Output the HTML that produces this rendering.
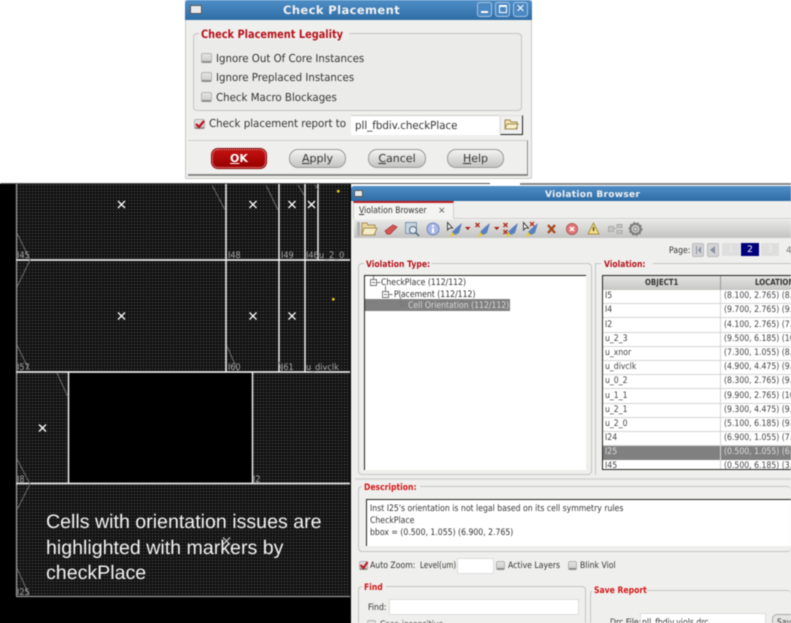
<!DOCTYPE html>
<html><head><meta charset="utf-8"><style>
html,body{margin:0;padding:0;background:#fff}
#p{position:relative;width:791px;height:623px;overflow:hidden;background:#fff;font-family:"DejaVu Sans","Liberation Sans",sans-serif;font-size:10px;color:#333;text-rendering:geometricPrecision;filter:blur(.4px)}
#p div,#p span,#p svg{position:absolute;box-sizing:border-box}
.t{white-space:nowrap;line-height:14px;height:14px}
.s{font-size:9px;transform:scaleX(.86);transform-origin:0 50%}
.d{font-size:11px;transform:scaleX(.93);transform-origin:0 50%}
.r{color:#b5121b;font-weight:bold;font-size:9px;transform:scaleX(.85);transform-origin:0 50%}
.cb{width:11px;height:10px;background:linear-gradient(#e4e4e2,#cfcfcd);border:1px solid #b5b5b3;border-bottom:2px solid #8d8d8b;border-radius:2px}
.g{border:1px solid #c4c4c2;border-radius:4px}
.btn{height:19px;top:149px;border:1px solid #9a9a98;border-radius:9px;background:linear-gradient(#f4f4f3,#dcdcda 50%,#c4c4c2);text-align:center;font-size:11px;line-height:17px;color:#333}
.bar{background:linear-gradient(#4f8ec7,#2f6da6);}
.lab{color:#a8a8a8;font-size:9px;white-space:nowrap;line-height:10px;height:10px;transform:scaleX(.9);transform-origin:0 50%}
.row{left:603px;width:188px;height:14.2px;border-bottom:1px solid #d4d4d4;background:#fff}
.c1,.c2{font-size:9px;line-height:13px;white-space:nowrap;color:#444;transform:scaleX(.86);transform-origin:0 50%}
.c1{left:2px;top:0}
.c2{left:121px;top:0}
</style></head><body>
<div style="position:absolute;left:0;top:184px;width:351px;height:439px;background:#000"></div>
<div style="position:absolute;left:351px;top:186px;width:440px;height:437px;background:#efefed"></div>
<div id="p">

<!-- top strip -->
<div style="left:0;top:183px;width:490px;height:1px;background:#555"></div>
<div style="left:520px;top:183px;width:271px;height:2px;background:#888"></div>

<!-- Canvas -->
<div style="left:0;top:184px;width:351px;height:439px;background:#000"></div>
<svg style="left:16px;top:184px" width="334" height="412"><defs><pattern id="dots" width="3" height="3" patternUnits="userSpaceOnUse"><rect width="3" height="3" fill="#131313"/><rect x="1" y="1" width="1" height="1" fill="#5c5c5c"/></pattern></defs><rect width="334" height="412" fill="url(#dots)"/></svg>
<div style="left:69px;top:373px;width:183px;height:110px;background:#000"></div>
<svg style="left:0;top:0" width="351" height="623" viewBox="0 0 351 623">
<g stroke="#d8d8d8" stroke-width="1.3" fill="none">
<path d="M16.500 184V596" stroke="#999"/>
<path d="M16 596.500H350" stroke="#999"/>
<path d="M16 260H350M16 372H350M16 483.500H350" stroke="#e5e5e5" stroke-width="1.7"/>
<path d="M226 184V372M279 184V372M305 184V372M318 184V260M68.500 372V483M252.500 372V483" stroke="#f0f0f0" stroke-width="1.500"/>
</g>
<g stroke="#6a6a6a" stroke-width="1" fill="none">
<path d="M212 185L225 210M266 185L278 210M298 185L304 195M315 185L318 190M17 233L30 260L17 287M17 345L29 370M227 346L238 371M279 362L282 371M57 373L68 397M17 459L30 484L17 510M17 568L29 595"/>
</g>
<g stroke="#fff" stroke-width="1.3" fill="none">
<path d="M118 201l7 7m0-7l-7 7M249.500 201l7 7m0-7l-7 7M288.500 201l7 7m0-7l-7 7M308 201l7 7m0-7l-7 7M118 312.500l7 7m0-7l-7 7M249.500 312.500l7 7m0-7l-7 7M288.500 312.500l7 7m0-7l-7 7M39 424.500l7 7m0-7l-7 7"/>
<path d="M223 537.500l7 7m0-7l-7 7" stroke="#bbb"/>
</g>
<rect x="337" y="190" width="2.500" height="2.500" fill="#f0d020"/>
<rect x="332" y="298" width="2.500" height="2.500" fill="#f0d020"/>
</svg>
<span class="lab" style="left:17px;top:251px">I45</span>
<span class="lab" style="left:228px;top:251px">I48</span>
<span class="lab" style="left:281px;top:251px">I49</span>
<span class="lab" style="left:306px;top:251px">I46</span>
<span class="lab" style="left:319px;top:251px;letter-spacing:.5px">u_2_0</span>
<span class="lab" style="left:17px;top:363px">I57</span>
<span class="lab" style="left:228px;top:363px">I60</span>
<span class="lab" style="left:281px;top:363px">I61</span>
<span class="lab" style="left:306px;top:363px">u_divclk</span>
<span class="lab" style="left:17px;top:475px">I8</span>
<span class="lab" style="left:253px;top:475px">I2</span>
<span class="lab" style="left:17px;top:588px">I25</span>
<div style="left:46px;top:510px;width:300px;font-family:'Liberation Sans',sans-serif;font-size:19.600px;line-height:25.500px;color:#f2f2f2;white-space:nowrap">Cells with orientation issues are<br>highlighted with markers by<br>checkPlace</div>

<!-- Check Placement dialog -->
<div style="left:185px;top:0;width:347px;height:179px;background:#efefed;border:1px solid #c8c8c8;border-top:0;border-radius:0 0 2px 2px"></div>
<div class="bar" style="left:185px;top:0;width:347px;height:20px;border-radius:3px 3px 0 0"></div>
<div style="left:190px;top:5px;width:12px;height:9px;background:#e8e8e8;border:1px solid #555"></div>
<div class="t" style="left:283px;top:3px;font-weight:bold;font-size:11.500px;color:#f2f2f2;letter-spacing:.4px">Check Placement</div>
<div style="left:477px;top:2px;width:15px;height:15px;border:1px solid #a8c6e2;border-radius:3px;background:#4a88c2"></div>
<div style="left:481px;top:11px;width:7px;height:2px;background:#fff"></div>
<div style="left:495px;top:2px;width:15px;height:15px;border:1px solid #a8c6e2;border-radius:3px;background:#4a88c2"></div>
<div style="left:499px;top:5px;width:8px;height:8px;border:1px solid #fff;border-top-width:2px"></div>
<div style="left:513px;top:2px;width:15px;height:15px;border:1px solid #a8c6e2;border-radius:3px;background:#4a88c2"></div>
<div class="t" style="left:513px;top:2px;width:15px;text-align:center;color:#fff;font-weight:bold;font-size:11px">✕</div>

<div class="g" style="left:193px;top:33px;width:329px;height:78px;background:#ebebe9"></div>
<div style="left:199px;top:28px;width:150px;height:12px;background:#efefed"></div>
<div class="t r" style="left:201px;top:27px;font-size:11.500px">Check Placement Legality</div>
<div class="cb" style="left:201px;top:53px"></div><div class="t d" style="left:216px;top:52px">Ignore Out Of Core Instances</div>
<div class="cb" style="left:201px;top:72px"></div><div class="t d" style="left:216px;top:71px">Ignore Preplaced Instances</div>
<div class="cb" style="left:201px;top:92px"></div><div class="t d" style="left:216px;top:91px">Check Macro Blockages</div>

<div class="cb" style="left:194px;top:119px"></div>
<svg style="left:194px;top:118px" width="12" height="12"><path d="M2 6l3 3 5-6" stroke="#c01020" stroke-width="2.200" fill="none"/></svg>
<div class="t d" style="left:209px;top:117px">Check placement report to</div>
<div style="left:351px;top:115px;width:148px;height:20px;background:#fff;border-top:1px solid #ccc"></div>
<div class="t d" style="left:355px;top:119px">pll_fbdiv.checkPlace</div>
<div style="left:500px;top:115px;width:23px;height:20px;background:#f0f0ee;border:1px solid #ddd;border-right:1px solid #222;border-bottom:1px solid #222"></div>
<svg style="left:504px;top:118px" width="15" height="13"><path d="M1 2h5l1 2h6v7H1z" fill="#f3e3ae" stroke="#a08a50"/><path d="M3 6h11l-2 5H1z" fill="#f8efcb" stroke="#a08a50"/></svg>

<div style="left:188px;top:140px;width:340px;height:36px;border-top:1px solid #cfcfcd;border-right:1px solid #888;border-bottom:2px solid #888"></div>
<div style="left:212px;top:149px;width:54px;height:19px;border-radius:6px;background:linear-gradient(#c41212,#980000);border:1px dotted #f4c0c0;outline:1px solid #8a0000;text-align:center;font-weight:bold;font-size:11px;line-height:17px;color:#fff"><u>O</u>K</div>
<div class="btn" style="left:289px;width:57px"><u>A</u>pply</div>
<div class="btn" style="left:368px;width:58px"><u>C</u>ancel</div>
<div class="btn" style="left:447px;width:57px"><u>H</u>elp</div>

<!-- Violation Browser window -->
<div style="left:351px;top:186px;width:440px;height:437px;background:#efefed"></div>
<div class="bar" style="left:351px;top:186px;width:440px;height:15px;border-radius:3px 0 0 0"></div>
<div style="left:354px;top:190px;width:9px;height:7px;background:#e8e8e8;border:1px solid #555"></div>
<div class="t" style="left:545px;top:188px;font-weight:bold;font-size:9px;color:#f2f2f2;letter-spacing:.3px">Violation Browser</div>
<div style="left:353px;top:218px;width:438px;height:1px;background:#d0d0ce"></div>
<div style="left:353px;top:201px;width:101px;height:18px;background:#f4f4f2;border:1px solid #d0d0ce;border-top:2px solid #c02020;border-bottom:0"></div>
<div class="t s" style="left:359px;top:204px"><u>V</u>iolation Browser</div>
<div class="t" style="left:438px;top:204px;font-size:9px;color:#555">×</div>
<div style="left:354px;top:220px;width:437px;height:18px;background:linear-gradient(#e8e8e6,#c4c4c2)"></div>
<div style="left:357px;top:222px;width:3px;height:14px;background:#b0b0ae"></div>
<svg style="left:352px;top:220px" width="300" height="18" viewBox="0 0 300 18">
<path d="M10 3h5l1 2h7v10H10z" fill="#e8d8a0" stroke="#a89058"/><path d="M12 8h13l-3 7H10z" fill="#f5ecc8" stroke="#a89058"/>
<path d="M33 11l8-6 4 2-7 7h-3z" fill="#d05858" stroke="#b84040"/>
<rect x="53.500" y="2.500" width="11" height="11" fill="#c8d4e0" stroke="#7f95aa"/><circle cx="61" cy="10" r="3.500" fill="#dfe8f0" stroke="#506880"/><path d="M64 13l3 3" stroke="#4c6074" stroke-width="1.500"/>
<circle cx="81" cy="9" r="6" fill="#a8b8e8" stroke="#7284c0"/><rect x="80" y="5" width="2" height="2" fill="#fff"/><rect x="80" y="8" width="2" height="5" fill="#fff"/>
<path d="M95.500 2.500l5 5.500h-3l-2 2z" fill="#fff" stroke="#444"/><path d="M110 3l-3 10-4 2-3-3 5-5z" fill="#5a80c0"/><path d="M100 12l-2 5 5-2z" fill="#e8c830"/>
<path d="M113 7h5.500l-2.700 3z" fill="#a01818"/>
<path d="M123.500 3l4 4m0-4l-4 4" stroke="#b03020" stroke-width="1.500"/><path d="M138 3l-3 10-4 2-3-3 5-5z" fill="#5a80c0"/><path d="M128 12l-2 5 5-2z" fill="#e8c830"/>
<path d="M142 7h5.500l-2.700 3z" fill="#a01818"/>
<path d="M151.500 3l4 4m0-4l-4 4M151.500 10l4 4m0-4l-4 4" stroke="#b03020" stroke-width="1.500"/><path d="M166 3l-3 10-4 2-3-3 5-5z" fill="#5a80c0"/><path d="M156 12l-2 5 5-2z" fill="#e8c830"/>
<path d="M171.500 2.500l5 5.500h-3l-2 2z" fill="#fff" stroke="#444"/><path d="M178 2l4 4m0-4l-4 4" stroke="#b03020" stroke-width="1.300"/><path d="M186 3l-3 10-4 2-3-3 5-5z" fill="#5a80c0"/><path d="M176 12l-2 5 5-2z" fill="#e8c830"/>
<path d="M196 5l7 8m0-8l-7 8" stroke="#a8481c" stroke-width="2.400"/>
<circle cx="220" cy="9" r="5.500" fill="#e07878" stroke="#b05858"/><path d="M218 7l4 4m0-4l-4 4" stroke="#fff" stroke-width="1.500"/>
<path d="M241.500 3l5.500 11h-11z" fill="#f4e088" stroke="#a89040"/><rect x="240.800" y="7" width="1.500" height="4" fill="#604810"/>
<path d="M256.500 6.500h5v5h-5zM265 4.500h5v3h-5zM265 10.500h5v3h-5zM261.500 8.500h3" fill="#c6c6c4" stroke="#aaaaa8"/>
<circle cx="283.500" cy="9" r="5" fill="none" stroke="#808080" stroke-width="2.200"/><circle cx="283.500" cy="9" r="2" fill="none" stroke="#808080"/><circle cx="283.500" cy="9" r="6.500" fill="none" stroke="#808080" stroke-dasharray="2 2"/>
</svg>
<div class="t s" style="left:669px;top:244px">Page:</div>
<div style="left:692px;top:243px;width:12px;height:14px;background:#d4d4d6;border:1px solid #bbb;border-radius:2px"></div>
<svg style="left:695px;top:246px" width="7" height="8"><path d="M1 0h1v8H1zM6 0v8L3 4z" fill="#8890a0"/></svg>
<div style="left:707px;top:243px;width:12px;height:14px;background:#d4d4d6;border:1px solid #bbb;border-radius:2px"></div>
<svg style="left:710px;top:246px" width="6" height="8"><path d="M5 0v8L0 4z" fill="#8890a0"/></svg>
<div style="left:722px;top:243px;width:18px;height:13px;background:#dedede"></div>
<div class="t" style="left:722px;top:243px;width:18px;text-align:center;font-size:9px;color:#eee">1</div>
<div style="left:741px;top:243px;width:18px;height:13px;background:#00007c"></div>
<div class="t" style="left:741px;top:243px;width:18px;text-align:center;font-size:9px;color:#fff">2</div>
<div style="left:761px;top:243px;width:18px;height:13px;background:#dedede"></div>
<div class="t" style="left:761px;top:243px;width:18px;text-align:center;font-size:9px;color:#eee">3</div>
<div class="t" style="left:786px;top:244px;font-size:9px;color:#777">4</div>

<!-- Violation type -->
<div class="g" style="left:358px;top:263px;width:234px;height:212px"></div>
<div style="left:364px;top:258px;width:68px;height:12px;background:#efefed"></div>
<div class="t r" style="left:366px;top:258px">Violation Type:</div>
<div style="left:364px;top:275px;width:222px;height:195px;background:#fff;border-top:1px solid #222;border-left:1px solid #222"></div>
<div style="left:365px;top:299px;width:145px;height:12px;background:#808080"></div>
<svg style="left:364px;top:275px" width="50" height="35"><g fill="none" stroke="#777"><rect x="6.500" y="4.500" width="6" height="6"/><path d="M8 7.500h3M12.500 7.500h4M9.500 1v3"/><rect x="18.500" y="16.500" width="6" height="6"/><path d="M20 19.500h3M24.500 19.500h4M21.500 11v5M36.500 22v8.500h8"/></g></svg>
<div class="t s" style="left:381px;top:276px">CheckPlace (112/112)</div>
<div class="t s" style="left:394px;top:288px">Placement (112/112)</div>
<div class="t s" style="left:408px;top:299px;color:#d8d8d8">Cell Orientation (112/112)</div>

<!-- Violation -->
<div style="left:595px;top:263px;width:1px;height:212px;background:#c4c4c2"></div>
<div style="left:596px;top:263px;width:195px;height:1px;background:#c4c4c2"></div>
<div style="left:601px;top:258px;width:52px;height:12px;background:#efefed"></div>
<div class="t r" style="left:604px;top:258px">Violation:</div>
<div style="left:602px;top:275px;width:189px;height:195px;background:#fff;border-top:1px solid #222;border-left:1px solid #222;border-bottom:1px solid #222"></div>
<div style="left:603px;top:276px;width:188px;height:14px;background:linear-gradient(#e4e4e2,#c6c6c4)"></div>
<div style="left:720px;top:276px;width:1px;height:14px;background:#999"></div>
<div class="t" style="left:645px;top:276px;font-size:8.500px;font-weight:bold;color:#333;transform:scaleX(.82);transform-origin:0 50%">OBJECT1</div>
<div class="t" style="left:755px;top:276px;font-size:8.500px;font-weight:bold;color:#333;transform:scaleX(.82);transform-origin:0 50%">LOCATION</div>
<div class="row" style="top:290px"><span class="c1">I5</span><span class="c2">(8.100, 2.765) (8.</span></div>
<div class="row" style="top:304px"><span class="c1">I4</span><span class="c2">(9.700, 2.765) (9.</span></div>
<div class="row" style="top:318.500px"><span class="c1">I2</span><span class="c2">(4.100, 2.765) (7.3</span></div>
<div class="row" style="top:332.500px"><span class="c1">u_2_3</span><span class="c2">(9.500, 6.185) (10</span></div>
<div class="row" style="top:346.500px"><span class="c1">u_xnor</span><span class="c2">(7.300, 1.055) (8.7</span></div>
<div class="row" style="top:361px"><span class="c1">u_divclk</span><span class="c2">(4.900, 4.475) (9.3</span></div>
<div class="row" style="top:375px"><span class="c1">u_0_2</span><span class="c2">(8.300, 2.765) (9.</span></div>
<div class="row" style="top:389.500px"><span class="c1">u_1_1</span><span class="c2">(9.900, 2.765) (10</span></div>
<div class="row" style="top:403.500px"><span class="c1">u_2_1</span><span class="c2">(9.300, 4.475) (9.9</span></div>
<div class="row" style="top:417.500px"><span class="c1">u_2_0</span><span class="c2">(5.100, 6.185) (9.5</span></div>
<div class="row" style="top:431.500px"><span class="c1">I24</span><span class="c2">(6.900, 1.055) (7.3</span></div>
<div class="row" style="top:446px;background:#808080;border:0"><span class="c1" style="color:#ddd">I25</span><span class="c2" style="color:#ddd">(0.500, 1.055) (6.9</span></div>
<div class="row" style="top:460px;height:9px;border:0;overflow:hidden"><span class="c1">I45</span><span class="c2">(0.500, 6.185) (3.7</span></div>
<div style="left:720px;top:290px;width:1px;height:179px;background:#d4d4d4"></div>
<div style="left:355px;top:478px;width:436px;height:2px;background:#d8d8d6"></div>

<!-- Description -->
<div class="g" style="left:358px;top:486px;width:433px;height:66px;border-right:0"></div>
<div style="left:362px;top:481px;width:58px;height:12px;background:#efefed"></div>
<div class="t r" style="left:364px;top:481px;color:#d01818">Description:</div>
<div style="left:366px;top:499px;width:425px;height:47px;background:#fff;border-top:1px solid #222;border-left:1px solid #222"></div>
<div class="t s" style="left:370px;top:502px">Inst I25's orientation is not legal based on its cell symmetry rules</div>
<div class="t s" style="left:370px;top:514px">CheckPlace</div>
<div class="t s" style="left:370px;top:526px">bbox = (0.500, 1.055) (6.900, 2.765)</div>

<div class="cb" style="left:359px;top:561px;width:9px;height:9px"></div>
<svg style="left:359px;top:560px" width="11" height="11"><path d="M1.500 5l3 3 4-6" stroke="#c01020" stroke-width="2" fill="none"/></svg>
<div class="t s" style="left:370px;top:559px">Auto Zoom:</div>
<div class="t s" style="left:420px;top:559px;transform:scaleX(.8)">Level(um)</div>
<div style="left:457px;top:558px;width:37px;height:16px;background:#fff;border:1px solid #ddd"></div>
<div class="cb" style="left:496px;top:561px;width:9px;height:9px"></div>
<div class="t s" style="left:508px;top:559px">Active Layers</div>
<div class="cb" style="left:568px;top:561px;width:9px;height:9px"></div>
<div class="t s" style="left:580px;top:559px">Blink Viol</div>

<!-- Find / Save -->
<div class="g" style="left:358px;top:586px;width:228px;height:50px"></div>
<div style="left:362px;top:581px;width:24px;height:12px;background:#efefed"></div>
<div class="t r" style="left:364px;top:581px;color:#d01818">Find</div>
<div class="t s" style="left:368px;top:601px">Find:</div>
<div style="left:389px;top:599px;width:190px;height:16px;background:#fff;border:1px solid #ddd"></div>
<div class="cb" style="left:367px;top:620px;width:9px;height:9px"></div>
<div class="t s" style="left:380px;top:618px">Case-insensitive</div>
<div class="g" style="left:590px;top:590px;width:201px;height:50px;border-right:0"></div>
<div style="left:592px;top:585px;width:55px;height:12px;background:#efefed"></div>
<div class="t r" style="left:594px;top:584px;color:#d01818">Save Report</div>
<div class="t s" style="left:610px;top:616px">Drc File:</div>
<div style="left:640px;top:613px;width:126px;height:14px;background:#fff;border:1px solid #ddd"></div>
<div class="t s" style="left:642px;top:616px">pll_fbdiv.viols.drc</div>
<div style="left:772px;top:614px;width:30px;height:16px;background:#e4e4e2;border:1px solid #aaa;border-radius:5px"></div>
<div class="t s" style="left:777px;top:616px">Save</div>
</div></body></html>
